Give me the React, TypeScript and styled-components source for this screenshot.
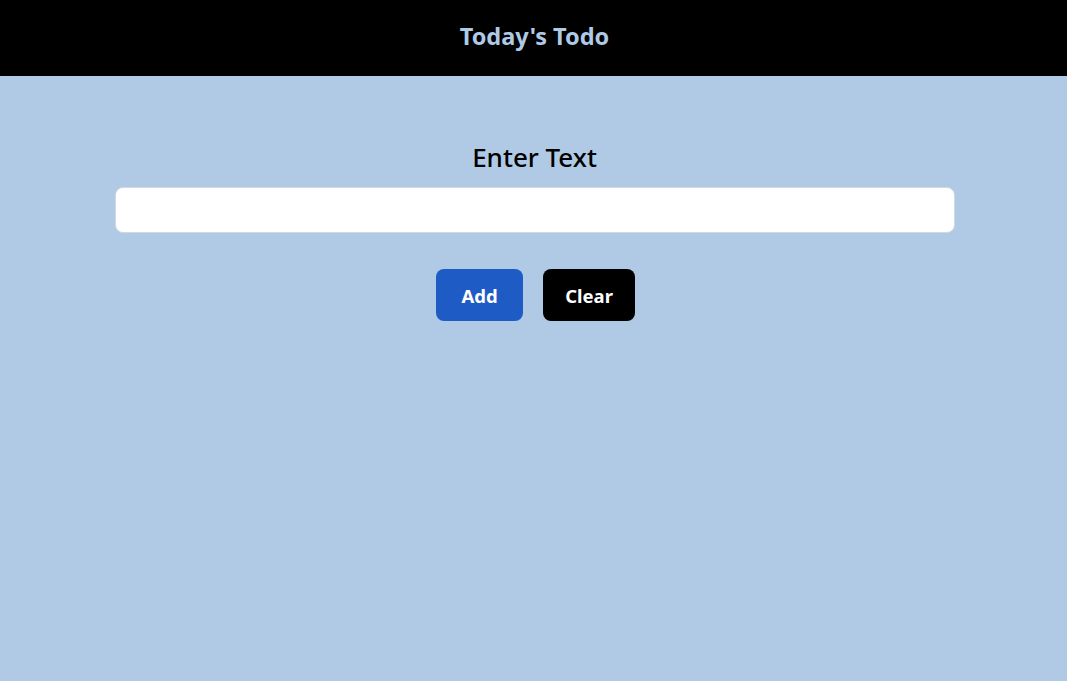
import React from "react";
import styled, { createGlobalStyle } from "styled-components";

const Global = createGlobalStyle`
  html, body { margin: 0; padding: 0; }
  body {
    background: #b0cae6;
    font-family: "Noto Sans", "Open Sans", sans-serif;
    min-height: 100vh;
  }
  * { box-sizing: border-box; }
`;

const Page = styled.div`
  min-height: 681px;
  background: #b0cae6;
  display: flex;
  flex-direction: column;
`;

const Header = styled.header`
  height: 76px;
  background: #000;
  display: flex;
  align-items: center;
  justify-content: center;
  padding-bottom: 4px;
`;

const Title = styled.h1`
  margin: 0;
  font-size: 23.5px;
  line-height: 30px;
  font-weight: 700;
  color: #b0cae6;
  padding-left: 2px;
`;

const Main = styled.main`
  display: flex;
  flex-direction: column;
  align-items: center;
  padding-top: 64px;
`;

const Label = styled.label`
  font-size: 26px;
  font-weight: 500;
  color: #000;
  line-height: 34px;
  padding-left: 2px;
`;

const Input = styled.input`
  width: 840px;
  height: 46px;
  margin-top: 13px;
  margin-left: 2px;
  border: 1px solid #cfd8e3;
  border-radius: 8px;
  background: #fff;
  outline: none;
  font-family: inherit;
  font-size: 16px;
  padding: 0 12px;
`;

const Buttons = styled.div`
  display: flex;
  gap: 20px;
  margin-top: 36px;
  margin-left: 4px;
`;

const Button = styled.button<{ $variant: "blue" | "black" }>`
  height: 52px;
  padding: 0 ${(p) => (p.$variant === "blue" ? "25.5px" : "22px")};
  border: none;
  border-radius: 8px;
  font-family: inherit;
  font-size: 18.5px;
  font-weight: 700;
  color: #fff;
  background: ${(p) => (p.$variant === "blue" ? "#1f5bc4" : "#000")};
  cursor: pointer;
`;

export default function App() {
  return (
    <>
      <Global />
      <Page>
        <Header>
          <Title>Today's Todo</Title>
        </Header>
        <Main>
          <Label htmlFor="todo">Enter Text</Label>
          <Input id="todo" type="text" />
          <Buttons>
            <Button $variant="blue">Add</Button>
            <Button $variant="black">Clear</Button>
          </Buttons>
        </Main>
      </Page>
    </>
  );
}
